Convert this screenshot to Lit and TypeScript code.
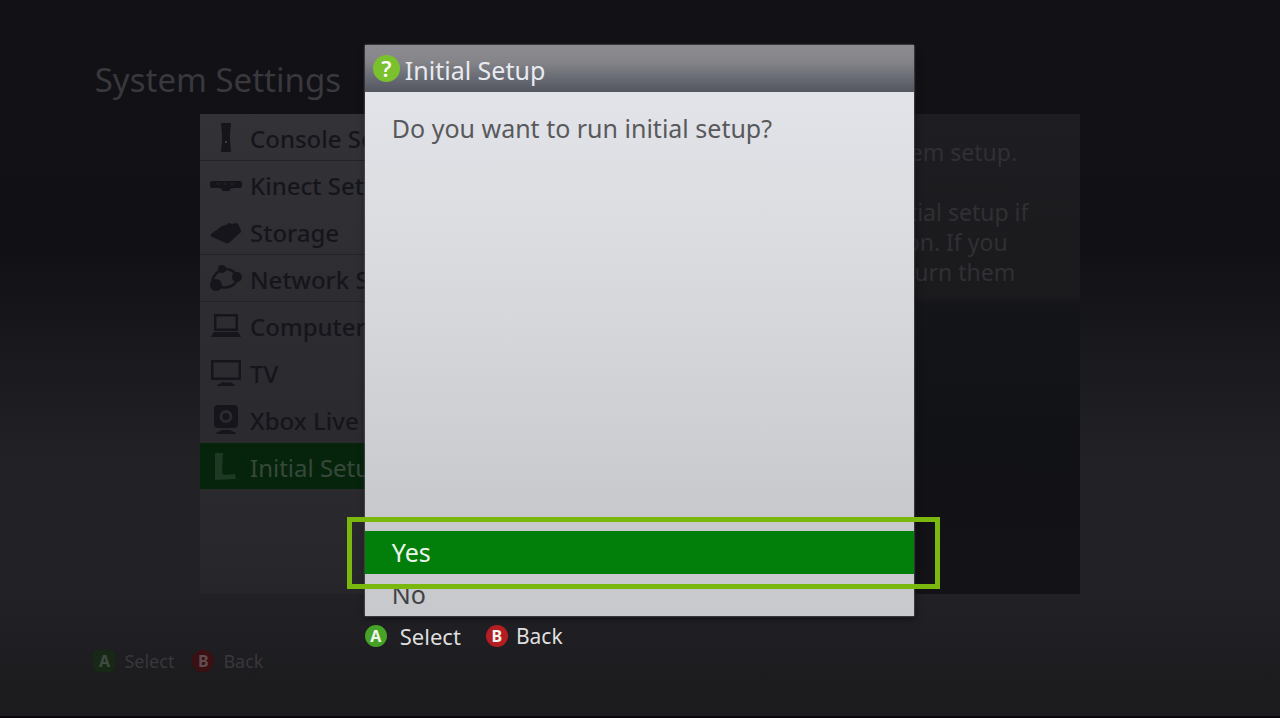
import { LitElement, html, css, svg } from "lit";
import { customElement, state } from "lit/decorators.js";
import { classMap } from "lit/directives/class-map.js";

const icons = {
  console: svg`<path d="M21 2h10l-1 11v7l1 11H21l1-11v-7z"/><circle cx="26" cy="21" r="1" fill="#4a4a50"/>`,
  kinect: svg`<path d="M12 13h28q2 0 2 2v3q0 2-2 2h-7l-3 1v2h-8v-2l-3-1h-7q-2 0-2-2v-3q0-2 2-2z"/><path d="M17 16h3m4 0h3m4 0h3" stroke="#29292e" stroke-width="1" fill="none"/>`,
  storage: svg`<path d="M11 19q-1 2 1 3l14 6q2 1 4-1l11-10v-2l-3-6-2-1-4 1-3-1-3 2-4 1z"/>`,
  network: svg`<g fill="none" stroke="currentColor" stroke-width="2.500"><path d="M13 22q-2-7 6-13M25 7q8 0 11 6M36 20q-5 7-16 5"/></g><circle cx="22" cy="7" r="4"/><circle cx="37" cy="15" r="5"/><circle cx="16" cy="23" r="6"/>`,
  computer: svg`<path fill-rule="evenodd" d="M14 5h24v17H14zM16.500 7.500v12h19v-12z"/><path d="M14 23h24l3 5H11z"/>`,
  tv: svg`<path fill-rule="evenodd" d="M12 4h28q1 0 1 1v18q0 1-1 1H12q-1 0-1-1V5q0-1 1-1zM13.500 6.500v15h25v-15z"/><path d="M23 26q4 1 7 0l5 3v1H17v-1z"/>`,
  camera: svg`<path fill-rule="evenodd" d="M18 2h16q4 0 4 4v15q0 4-4 4H18q-4 0-4-4V6q0-4 4-4zm8 5a6.500 6.500 0 1 0 0 13 6.500 6.500 0 0 0 0-13zm0 3a3.500 3.500 0 1 1 0 7 3.500 3.500 0 0 1 0-7z"/><path d="M22 27h8l6 3v1H16v-1z"/>`,
  setup: svg`<path d="M15 3h8l-1 20 2 2 11-1 1 5-21 1z"/>`,
};

@customElement("app-root")
export class AppRoot extends LitElement {
  static styles = css`
    :host {
      display: block;
      font-family: "Noto Sans", sans-serif;
      font-size: 25px;
      line-height: 30px;
    }
    button, h1, h2, p, ul { margin: 0; padding: 0; }
    button {
      border: 0;
      background: none;
      color: inherit;
      font: inherit;
      text-align: left;
      cursor: pointer;
    }
    .screen {
      position: relative;
      box-sizing: border-box;
      min-height: 100vh;
      overflow: hidden;
      display: flex;
      flex-direction: column;
      padding: 58px 0 40px;
      background: linear-gradient(#121116, #111014 35%, #1a1a1e 50%, #222126 65%, #222126 82%, #1c1b1e 96%);
      border-bottom: 2px solid #0b060b;
    }
    .title {
      padding-left: 7.4vw;
      margin-bottom: 12px;
      font-size: 33px;
      line-height: 44px;
      font-weight: 400;
      color: #38383d;
    }
    .columns {
      flex: 1;
      display: grid;
      grid-template-columns: 1fr 1fr;
      margin: 0 15.625%;
    }
    .menu {
      list-style: none;
      background: linear-gradient(#333237, #2d2c31 40%, #2a292e 80%, #26252a);
    }
    .item { border-bottom: 1px solid #222227; }
    .item.plain { border-color: transparent; }
    .entry {
      display: flex;
      align-items: center;
      gap: 8px;
      width: 100%;
      height: 46px;
      padding-top: 2px;
      font-size: 24px;
      font-weight: 500;
      color: #15151b;
    }
    .entry.current { background: #06240b; color: #37483b; font-weight: 400; }
    .label { padding-top: 2px; white-space: nowrap; }
    .glyph { width: 42px; height: 34px; fill: currentColor; }
    .entry.current .glyph { color: #1d3823; }
    .about { background: linear-gradient(#1e1d21, #1a1a1d 38%, #141519 40%, #111216 65%, #131216); }
    .about p { padding: 23px 0 0 32px; font-size: 23px; color: #303034; white-space: pre-line; }
    .hints { display: flex; align-items: center; gap: 25px; }
    .hint { display: flex; align-items: center; gap: 13px; color: #dededf; font-size: 22px; }
    .hint.back { gap: 8px; font-size: 21px; }
    .badge {
      display: grid;
      place-items: center;
      width: 22px;
      height: 22px;
      border-radius: 50%;
      color: #f0f5ee;
      font: 700 16px/22px "Noto Sans", sans-serif;
    }
    .a { background: #46a327; }
    .b { background: #b41e22; }
    .hints.dim { padding-left: 7.3vw; margin-top: 52px; gap: 18px; }
    .dim .hint { color: #39373b; font-size: 18px; gap: 9px; }
    .dim .badge { color: #4c4c4c; }
    .dim .a { background: #172817; color: #3f4b3f; border-radius: 5px; }
    .dim .b { background: #3b1013; color: #5e4c4e; }
    .overlay {
      position: absolute;
      inset: 45px 28.6% auto 28.5%;
    }
    .dialog {
      display: flex;
      flex-direction: column;
      min-height: 571px;
      background: linear-gradient(#e5e6ec, #d9dadd 40%, #c9cacd 80%, #c8c9cd);
      box-shadow: 0 0 2px #8a8a90, 1px 2px 6px #0a0a0d;
    }
    .head {
      display: flex;
      align-items: center;
      gap: 5px;
      height: 47px;
      padding-left: 8px;
      background: linear-gradient(#8c8b91, #858589 35%, #6c6f77 65%, #545660);
      color: #e8eaf0;
    }
    .head h2 { font-size: 25px; font-weight: 400; padding-top: 2px; }
    .mark {
      display: grid;
      place-items: center;
      width: 27px;
      height: 27px;
      border-radius: 50%;
      background: #7bc02d;
      color: #fff;
      font-size: 22px;
      font-weight: 600;
      line-height: 27px;
    }
    .question { flex: 1; padding: 21px 27px; color: #58595c; }
    .choice { position: relative; display: block; width: 100%; height: 42px; padding: 0 27px 2px; color: #414246; line-height: 38px; }
    .choice.chosen { height: 43px; background: #027f0a; color: #edf5ed; }
    .outline {
      position: absolute;
      z-index: 1;
      inset: -14px -26px -15px -18px;
      border: 5px solid #7ab80e;
      pointer-events: none;
    }
    .overlay .hints { margin-top: 5px; }
  `;

  @state() private choice = "Yes";

  private items = [
    ["console", "Console Settings"],
    ["kinect", "Kinect Settings"],
    ["storage", "Storage"],
    ["network", "Network Settings"],
    ["computer", "Computers"],
    ["tv", "TV"],
    ["camera", "Xbox Live Vision"],
    ["setup", "Initial Setup"],
  ] as const;

  private hints(dim: boolean) {
    return html`<div class=${classMap({ hints: true, dim })}>
      <button class="hint"><span class="badge a">A</span>Select</button>
      <button class="hint back"><span class="badge b">B</span>Back</button>
    </div>`;
  }

  render() {
    return html`
      <main class="screen">
        <h1 class="title">System Settings</h1>
        <div class="columns">
          <ul class="menu">
            ${this.items.map(([icon, label], i) => html`
              <li class=${classMap({ item: true, plain: i === 1 || i > 3 })}>
                <button class=${classMap({ entry: true, current: icon === "setup" })}>
                  <svg class="glyph" viewBox="0 0 42 34" aria-hidden="true">${icons[icon]}</svg><span class="label">${label}</span>
                </button>
              </li>`)}
          </ul>
          <section class="about"><p>${"Go through initial system setup.\n\nYou should run the initial setup if\nyou switch your location. If you\nadjust the settings, return them"}</p></section>
        </div>
        ${this.hints(true)}
        <div class="overlay">
          <section class="dialog" role="dialog" aria-labelledby="heading">
            <header class="head"><span class="mark">?</span><h2 id="heading">Initial Setup</h2></header>
            <p class="question">Do you want to run initial setup?</p>
            ${["Yes", "No"].map((name) => html`
              <button class=${classMap({ choice: true, chosen: this.choice === name })} @click=${() => (this.choice = name)}>
                ${name}${this.choice === name ? html`<span class="outline"></span>` : ""}
              </button>`)}
          </section>
          ${this.hints(false)}
        </div>
      </main>`;
  }
}
